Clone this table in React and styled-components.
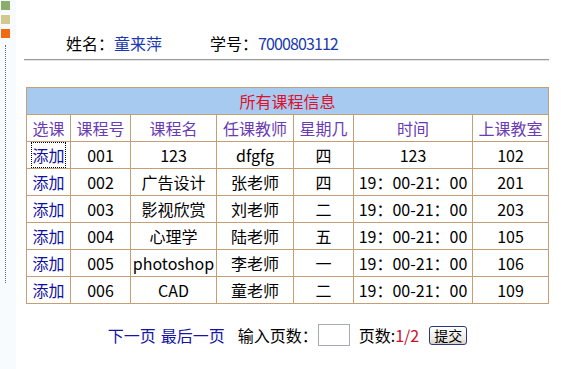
import React from 'react';
import styled, { createGlobalStyle } from 'styled-components';

const GlobalStyle = createGlobalStyle`
    body {
        margin: 0;
        background: #fff;
        font-family: "Noto Sans CJK SC", "Liberation Sans", sans-serif;
        font-size: 16px;
        color: #000;
    }
`;

const courses = [
    { no: '001', name: '123', teacher: 'dfgfg', day: '四', time: '123', room: '102' },
    { no: '002', name: '广告设计', teacher: '张老师', day: '四', time: '19：00-21：00', room: '201' },
    { no: '003', name: '影视欣赏', teacher: '刘老师', day: '二', time: '19：00-21：00', room: '203' },
    { no: '004', name: '心理学', teacher: '陆老师', day: '五', time: '19：00-21：00', room: '105' },
    { no: '005', name: 'photoshop', teacher: '李老师', day: '一', time: '19：00-21：00', room: '106' },
    { no: '006', name: 'CAD', teacher: '童老师', day: '二', time: '19：00-21：00', room: '109' },
];

const columns = [
    { label: '选课', width: 44 },
    { label: '课程号', width: 60 },
    { label: '课程名', width: 86 },
    { label: '任课教师', width: 77 },
    { label: '星期几', width: 60 },
    { label: '时间', width: 119 },
    { label: '上课教室', width: 76 },
];

const App = () => {
    return (
        <>
            <GlobalStyle />
            <Page>
                <SideStrip>
                    <Square color="#88ad6c" />
                    <Square color="#d3c98d" />
                    <Square color="#f26a10" />
                    <DottedLine />
                </SideStrip>
                <Main>
                    <InfoLine>
                        <Field>姓名：<Value>童来萍</Value></Field>
                        <Field>学号：<Value narrow>7000803112</Value></Field>
                    </InfoLine>
                    <Rule />
                    <CourseTable>
                        <colgroup>
                            {columns.map(c => <col key={c.label} style={{ width: c.width }} />)}
                        </colgroup>
                        <thead>
                            <tr>
                                <TitleCell colSpan={7}>所有课程信息</TitleCell>
                            </tr>
                            <tr>
                                {columns.map(c => <HeadCell key={c.label}>{c.label}</HeadCell>)}
                            </tr>
                        </thead>
                        <tbody>
                            {courses.map((c, i) => (
                                <tr key={c.no}>
                                    <Cell><AddLink focused={i === 0}>添加</AddLink></Cell>
                                    <Cell>{c.no}</Cell>
                                    <Cell>{c.name}</Cell>
                                    <Cell>{c.teacher}</Cell>
                                    <Cell>{c.day}</Cell>
                                    <Cell>{c.time}</Cell>
                                    <Cell>{c.room}</Cell>
                                </tr>
                            ))}
                        </tbody>
                    </CourseTable>
                    <Pager>
                        <PageLink>下一页</PageLink>
                        <PageLink last>最后一页</PageLink>
                        <PagerLabel>输入页数：</PagerLabel>
                        <PageInput />
                        <PagerLabel>页数:<PageCount>1/2</PageCount></PagerLabel>
                        <SubmitButton>提交</SubmitButton>
                    </Pager>
                </Main>
            </Page>
        </>
    );
};

export default App;

const Page = styled.div`
    display: flex;
    height: 369px;
`;

const SideStrip = styled.div`
    width: 16px;
    flex-shrink: 0;
    background: #f8fbfe;
    display: flex;
    flex-direction: column;
    padding-top: 1px;
    box-sizing: border-box;
`;

const Square = styled.div`
    width: 9px;
    height: 9px;
    margin-left: 1px;
    margin-bottom: 5px;
    background: ${p => p.color};
`;

const DottedLine = styled.div`
    width: 0;
    height: 238px;
    margin-left: 5px;
    margin-top: 2px;
    border-left: 1px dotted #666;
`;

const Main = styled.div`
    margin-left: 8px;
    width: 525px;
    display: flex;
    flex-direction: column;
`;

const InfoLine = styled.div`
    display: flex;
    gap: 48px;
    padding-left: 42px;
    margin-top: 32px;
    height: 22px;
    line-height: 22px;
`;

const Field = styled.span`
    color: #000;
`;

const Value = styled.span`
    color: #1a3ab0;
    letter-spacing: ${p => (p.narrow ? '-0.9px' : '0')};
`;

const Rule = styled.div`
    margin-top: 5px;
    height: 0;
    border-top: 1px solid #9a9a9a;
    border-bottom: 1px solid #e4e4e4;
`;

const CourseTable = styled.table`
    margin-top: 26px;
    margin-left: 2px;
    width: 523px;
    border-collapse: collapse;
    table-layout: fixed;
    line-height: 20px;
`;

const TitleCell = styled.td`
    height: 26px;
    padding: 0;
    text-align: center;
    background: #a6caf0;
    color: #e0102a;
    border: 1px solid #c49e74;
`;

const HeadCell = styled.td`
    height: 26px;
    padding: 0;
    text-align: center;
    color: #6a3cb4;
    border: 1px solid #c49e74;
`;

const Cell = styled.td`
    height: 26px;
    padding: 0;
    text-align: center;
    border: 1px solid #c49e74;
    white-space: nowrap;
`;

const AddLink = styled.span`
    color: #1010a0;
    outline: ${p => (p.focused ? '1px dotted #000' : 'none')};
`;

const Pager = styled.div`
    display: flex;
    align-items: center;
    justify-content: center;
    margin-top: 20px;
    margin-left: 2px;
    height: 22px;
    line-height: 22px;
`;

const PageLink = styled.span`
    color: #1414a8;
    margin-right: ${p => (p.last ? '13px' : '5px')};
`;

const PagerLabel = styled.span`
    color: #000;
`;

const PageInput = styled.input`
    width: 30px;
    height: 20px;
    margin: 0 9px 0 0;
    padding: 0;
    border: 1px solid #a5acb5;
    background: #fff;
`;

const PageCount = styled.span`
    color: #c8102a;
`;

const SubmitButton = styled.button`
    margin-left: 10px;
    height: 19px;
    padding: 0 4px;
    font-family: "Noto Sans CJK SC", sans-serif;
    font-size: 14px;
    line-height: 15px;
    color: #000;
    border: 1px solid #2a3a7a;
    border-radius: 3px;
    background: linear-gradient(#ffffff, #ecebe6 70%, #d6d0c5);
`;
